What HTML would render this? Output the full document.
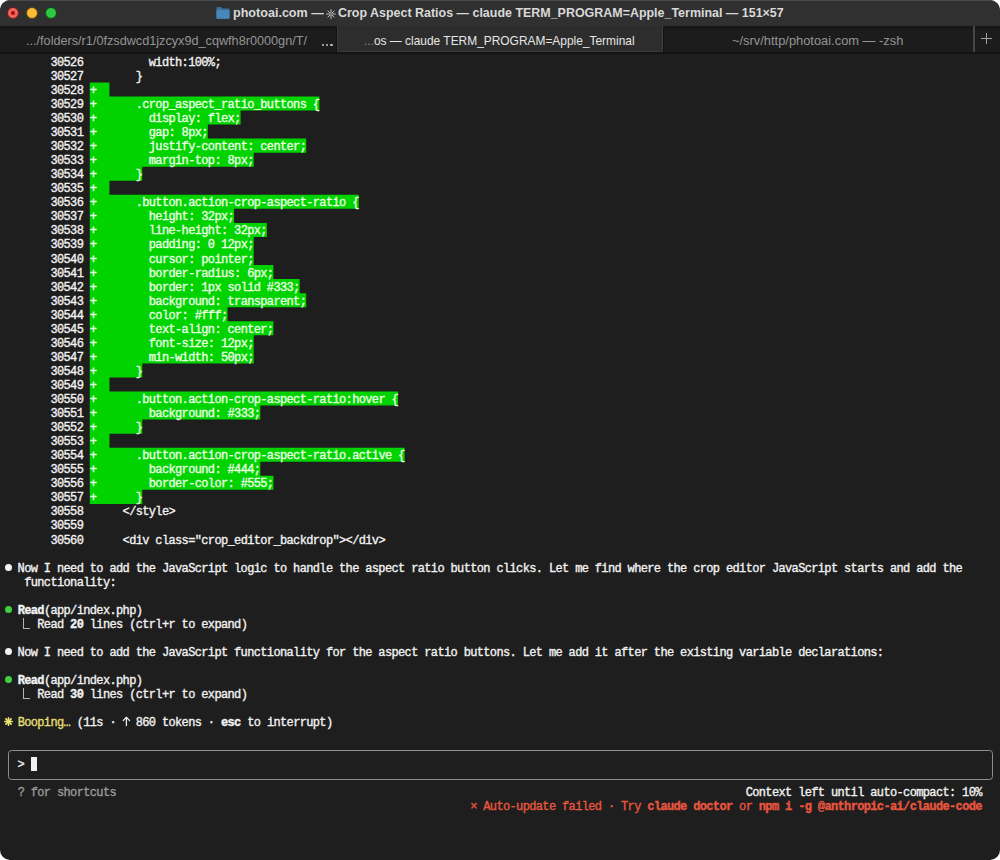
<!DOCTYPE html>
<html><head><meta charset="utf-8"><style>
html,body{margin:0;padding:0;background:#fff;}
body{width:1000px;height:860px;position:relative;overflow:hidden;}
.win{position:absolute;left:0;top:0;width:1000px;height:860px;border-radius:10px;overflow:hidden;background:#1e1e1e;}
.title{position:absolute;left:0;top:0;width:1000px;height:26px;background:#303030;border-top:1px solid #4b4b4b;box-sizing:border-box;border-radius:10px 10px 0 0;}
.tl{position:absolute;top:5.9px;width:12px;height:12px;border-radius:50%;box-sizing:border-box;}
.ttxt{position:absolute;left:234px;top:4px;font:bold 13px "Liberation Sans",sans-serif;color:#d9d9d9;white-space:pre;transform-origin:0 0;}
.tabs{position:absolute;left:0;top:26px;width:1000px;height:26px;background:#1c1c1c;}
.tab{position:absolute;top:0;height:26px;box-sizing:border-box;border-top:3px solid #171717;}
.tabt{position:absolute;top:7px;font:12.8px "Liberation Sans",sans-serif;white-space:pre;transform-origin:0 0;}
.sep{position:absolute;left:0;top:52px;width:1000px;height:1.6px;background:#131313;}
.t{position:absolute;left:4.5px;font-family:"Liberation Mono",monospace;font-size:12.0px;letter-spacing:-0.6422px;line-height:14.05px;white-space:pre;color:#f2f2f2;-webkit-text-stroke:0.35px currentColor;}
.t b{font-weight:bold;}
.ln{color:#f2f2f2;}
.gt{color:#eaffe4;}
.yl{color:#e6df74;}
.gr{color:#9a9a9a;}
.rd{color:#e9563f;}
.bx{position:absolute;}
.dot{position:absolute;border-radius:50%;}
.crn{position:absolute;width:6.5px;height:11.5px;border-left:1.1px solid #b4b4b4;border-bottom:1.1px solid #b4b4b4;box-sizing:border-box;}
.ibox{position:absolute;border:1.3px solid #8e8e8e;border-radius:3.5px;box-sizing:border-box;}
.ast{position:absolute;}
.up{display:inline-block;transform:scale(1.2,1.45);transform-origin:50% 85%;}
</style></head><body>
<div class="win">
<div class="title">
 <div class="tl" style="left:7.2px;background:#f4625c;border:1.3px solid #6e1d1a;"><div style="position:absolute;left:2.7px;top:2.7px;width:4px;height:4px;border-radius:50%;background:#a00d0d"></div></div>
 <div class="tl" style="left:26.1px;background:#f9bd35;border:1.3px solid #5e420a;"></div>
 <div class="tl" style="left:44.7px;background:#2cc83f;border:1.3px solid #0f4a16;"></div>
 <svg style="position:absolute;left:215.5px;top:5px" width="14" height="13" viewBox="0 0 14 13"><path d="M0.5 2 Q0.5 1 1.5 1 L5 1 L6.3 2.5 L12.5 2.5 Q13.5 2.5 13.5 3.5 L13.5 12 Q13.5 12.8 12.7 12.8 L1.3 12.8 Q0.5 12.8 0.5 12 Z" fill="#3a6f99"/><path d="M0.5 4 L13.5 4 L13.5 12 Q13.5 12.8 12.7 12.8 L1.3 12.8 Q0.5 12.8 0.5 12 Z" fill="#4787b9"/></svg>
 <div class="ttxt" id="ttlA" style="left:233px;transform:scaleX(0.967)">photoai.com —</div>
 <svg style="position:absolute;left:325.5px;top:8px" width="10" height="10" viewBox="-5 -5 10 10"><g stroke="#c8c8c8" stroke-width="0.95" stroke-linecap="round"><path d="M0,-4.4V-1.2M0,4.4V1.2M-4.4,0H-1.2M4.4,0H1.2M-3.1,-3.1L-0.9,-0.9M3.1,3.1L0.9,0.9M-3.1,3.1L-0.9,0.9M3.1,-3.1L0.9,-0.9"/></g></svg>
 <div class="ttxt" id="ttlB" style="left:337.5px;transform:scaleX(0.958)">Crop Aspect Ratios — claude TERM_PROGRAM=Apple_Terminal — 151×57</div>
</div>
<div class="tabs">
 <div class="tab" style="left:0;width:336.5px;background:#1c1c1c;border-right:1px solid #111;"></div>
 <div class="tab" style="left:336.5px;width:326px;background:#2d2d2d;border-top:0;border-left:1px solid #3c3c3c;border-right:1px solid #3e3e3e;border-bottom:1px solid #3a3a3a;"></div>
 <div class="tab" style="left:662.5px;width:311px;background:#1c1c1c;border-left:1px solid #111;"></div>
 <div class="tab" style="left:974px;width:26px;background:#1c1c1c;"></div>
 <div style="position:absolute;left:973px;top:0px;width:2px;height:26px;background:#454545"></div>
 <div class="tabt" id="t1" style="left:26.4px;transform:scaleX(0.99);color:#949494">.../folders/r1/0fzsdwcd1jzcyx9d_cqwfh8r0000gn/T/</div>
 <div style="position:absolute;left:322px;top:17.8px;width:2.2px;height:2.2px;border-radius:50%;background:#c4c4c4"></div><div style="position:absolute;left:326.2px;top:17.8px;width:2.2px;height:2.2px;border-radius:50%;background:#c4c4c4"></div><div style="position:absolute;left:330.4px;top:17.8px;width:2.2px;height:2.2px;border-radius:50%;background:#c4c4c4"></div>
 <div class="tabt" id="t2" style="left:363.6px;transform:scaleX(0.932);color:#e6e6e6"><span style="color:#8a8a8a">...</span>os — claude TERM_PROGRAM=Apple_Terminal</div>
 <div class="tabt" id="t3" style="left:732px;transform:scaleX(1.006);color:#949494">~/srv/http/photoai.com — -zsh</div>
 <div style="position:absolute;left:981px;top:12px;width:11px;height:1px;background:#a0a0a0"></div>
 <div style="position:absolute;left:986px;top:7px;width:1px;height:11px;background:#a0a0a0"></div>
</div>
<div class="sep"></div>
<svg style="position:absolute;left:0;top:0" width="1000" height="860"><path d="M89.77,82.40 L109.44,82.40 L109.44,96.45 L319.33,96.45 L319.33,110.50 L240.62,110.50 L240.62,124.55 L207.83,124.55 L207.83,138.60 L306.21,138.60 L306.21,152.65 L253.74,152.65 L253.74,166.70 L142.24,166.70 L142.24,180.75 L109.44,180.75 L109.44,194.80 L358.69,194.80 L358.69,208.85 L234.06,208.85 L234.06,222.90 L266.86,222.90 L266.86,236.95 L253.74,236.95 L253.74,251.00 L253.74,251.00 L253.74,265.05 L273.42,265.05 L273.42,279.10 L299.66,279.10 L299.66,293.15 L306.21,293.15 L306.21,307.20 L227.51,307.20 L227.51,321.25 L273.42,321.25 L273.42,335.30 L253.74,335.30 L253.74,349.35 L253.74,349.35 L253.74,363.40 L142.24,363.40 L142.24,377.45 L109.44,377.45 L109.44,391.50 L398.04,391.50 L398.04,405.55 L260.30,405.55 L260.30,419.60 L142.24,419.60 L142.24,433.65 L109.44,433.65 L109.44,447.70 L404.60,447.70 L404.60,461.75 L260.30,461.75 L260.30,475.80 L273.42,475.80 L273.42,489.85 L142.24,489.85 L142.24,503.90 L89.77,503.90 Z" fill="#00d300"/></svg>
<div class="t" style="top:55.80px"><span class="ln">       30526 </span>         width:100%;</div>
<div class="t" style="top:69.85px"><span class="ln">       30527 </span>       }</div>
<div class="t" style="top:83.90px"><span class="ln">       30528 </span><span class="gt">+  </span></div>
<div class="t" style="top:97.95px"><span class="ln">       30529 </span><span class="gt">+      .crop_aspect_ratio_buttons {</span></div>
<div class="t" style="top:112.00px"><span class="ln">       30530 </span><span class="gt">+        display: flex;</span></div>
<div class="t" style="top:126.05px"><span class="ln">       30531 </span><span class="gt">+        gap: 8px;</span></div>
<div class="t" style="top:140.10px"><span class="ln">       30532 </span><span class="gt">+        justify-content: center;</span></div>
<div class="t" style="top:154.15px"><span class="ln">       30533 </span><span class="gt">+        margin-top: 8px;</span></div>
<div class="t" style="top:168.20px"><span class="ln">       30534 </span><span class="gt">+      }</span></div>
<div class="t" style="top:182.25px"><span class="ln">       30535 </span><span class="gt">+  </span></div>
<div class="t" style="top:196.30px"><span class="ln">       30536 </span><span class="gt">+      .button.action-crop-aspect-ratio {</span></div>
<div class="t" style="top:210.35px"><span class="ln">       30537 </span><span class="gt">+        height: 32px;</span></div>
<div class="t" style="top:224.40px"><span class="ln">       30538 </span><span class="gt">+        line-height: 32px;</span></div>
<div class="t" style="top:238.45px"><span class="ln">       30539 </span><span class="gt">+        padding: 0 12px;</span></div>
<div class="t" style="top:252.50px"><span class="ln">       30540 </span><span class="gt">+        cursor: pointer;</span></div>
<div class="t" style="top:266.55px"><span class="ln">       30541 </span><span class="gt">+        border-radius: 6px;</span></div>
<div class="t" style="top:280.60px"><span class="ln">       30542 </span><span class="gt">+        border: 1px solid #333;</span></div>
<div class="t" style="top:294.65px"><span class="ln">       30543 </span><span class="gt">+        background: transparent;</span></div>
<div class="t" style="top:308.70px"><span class="ln">       30544 </span><span class="gt">+        color: #fff;</span></div>
<div class="t" style="top:322.75px"><span class="ln">       30545 </span><span class="gt">+        text-align: center;</span></div>
<div class="t" style="top:336.80px"><span class="ln">       30546 </span><span class="gt">+        font-size: 12px;</span></div>
<div class="t" style="top:350.85px"><span class="ln">       30547 </span><span class="gt">+        min-width: 50px;</span></div>
<div class="t" style="top:364.90px"><span class="ln">       30548 </span><span class="gt">+      }</span></div>
<div class="t" style="top:378.95px"><span class="ln">       30549 </span><span class="gt">+  </span></div>
<div class="t" style="top:393.00px"><span class="ln">       30550 </span><span class="gt">+      .button.action-crop-aspect-ratio:hover {</span></div>
<div class="t" style="top:407.05px"><span class="ln">       30551 </span><span class="gt">+        background: #333;</span></div>
<div class="t" style="top:421.10px"><span class="ln">       30552 </span><span class="gt">+      }</span></div>
<div class="t" style="top:435.15px"><span class="ln">       30553 </span><span class="gt">+  </span></div>
<div class="t" style="top:449.20px"><span class="ln">       30554 </span><span class="gt">+      .button.action-crop-aspect-ratio.active {</span></div>
<div class="t" style="top:463.25px"><span class="ln">       30555 </span><span class="gt">+        background: #444;</span></div>
<div class="t" style="top:477.30px"><span class="ln">       30556 </span><span class="gt">+        border-color: #555;</span></div>
<div class="t" style="top:491.35px"><span class="ln">       30557 </span><span class="gt">+      }</span></div>
<div class="t" style="top:505.40px"><span class="ln">       30558 </span>     &lt;/style&gt;</div>
<div class="t" style="top:519.45px"><span class="ln">       30559 </span>   </div>
<div class="t" style="top:533.50px"><span class="ln">       30560 </span>     &lt;div class="crop_editor_backdrop"&gt;&lt;/div&gt;</div>
<div class="t" style="top:561.60px">  Now I need to add the JavaScript logic to handle the aspect ratio button clicks. Let me find where the crop editor JavaScript starts and add the</div>
<div class="t" style="top:575.65px">   functionality:</div>
<div class="t" style="top:603.75px">  <b>Read</b>(app/index.php)</div>
<div class="t" style="top:617.80px">     Read <b>20</b> lines (ctrl+r to expand)</div>
<div class="t" style="top:645.90px">  Now I need to add the JavaScript functionality for the aspect ratio buttons. Let me add it after the existing variable declarations:</div>
<div class="t" style="top:674.00px">  <b>Read</b>(app/index.php)</div>
<div class="t" style="top:688.05px">     Read <b>30</b> lines (ctrl+r to expand)</div>
<div class="t" style="top:716.15px">  <span class="yl">Booping…</span> (11s ·   860 tokens · <b>esc</b> to interrupt)</div>
<div class="t" style="top:758.30px">  &gt;</div>
<div class="t" style="top:786.40px">  <span class="gr">? for shortcuts</span>                                                                                                Context left until auto-compact: 10%</div>
<div class="t" style="top:800.45px">                                                                       <span class="rd">× Auto-update failed · Try <b>claude doctor</b> or <b>npm i -g @anthropic-ai/claude-code</b></span></div>
<div class="dot" style="left:4.88px;top:563.80px;width:7.0px;height:7.0px;background:#f2f2f2"></div><div class="dot" style="left:4.88px;top:605.95px;width:7.0px;height:7.0px;background:#3fd13f"></div><div class="dot" style="left:4.88px;top:648.10px;width:7.0px;height:7.0px;background:#f2f2f2"></div><div class="dot" style="left:4.88px;top:676.20px;width:7.0px;height:7.0px;background:#3fd13f"></div>
<div class="crn" style="left:23.02px;top:617.50px"></div><div class="crn" style="left:23.02px;top:687.75px"></div>
<div class="ibox" style="left:8px;top:750.00px;width:984.5px;height:29.80px"></div>
<div class="bx" style="left:30.74px;top:756.80px;width:6.56px;height:14.05px;background:#f0f0f0"></div>
<svg class="ast" style="left:3.78px;top:717.45px" width="9" height="9" viewBox="-4.5 -4.5 9 9"><g stroke="#e9e36e" stroke-width="1.7" stroke-linecap="round"><line x1="0" y1="-3.6" x2="0" y2="3.6"/><line x1="-3.6" y1="0" x2="3.6" y2="0"/><line x1="-2.6" y1="-2.6" x2="2.6" y2="2.6"/><line x1="-2.6" y1="2.6" x2="2.6" y2="-2.6"/></g></svg>
<svg style="position:absolute;left:122px;top:716px" width="9" height="11" viewBox="0 0 9 11"><g stroke="#f0f0f0" stroke-width="1.25" stroke-linecap="round" stroke-linejoin="round" fill="none"><path d="M4.4,1.3V9.6M1.2,4.6L4.4,1.3L7.6,4.6"/></g></svg>
</div>
</body></html>
